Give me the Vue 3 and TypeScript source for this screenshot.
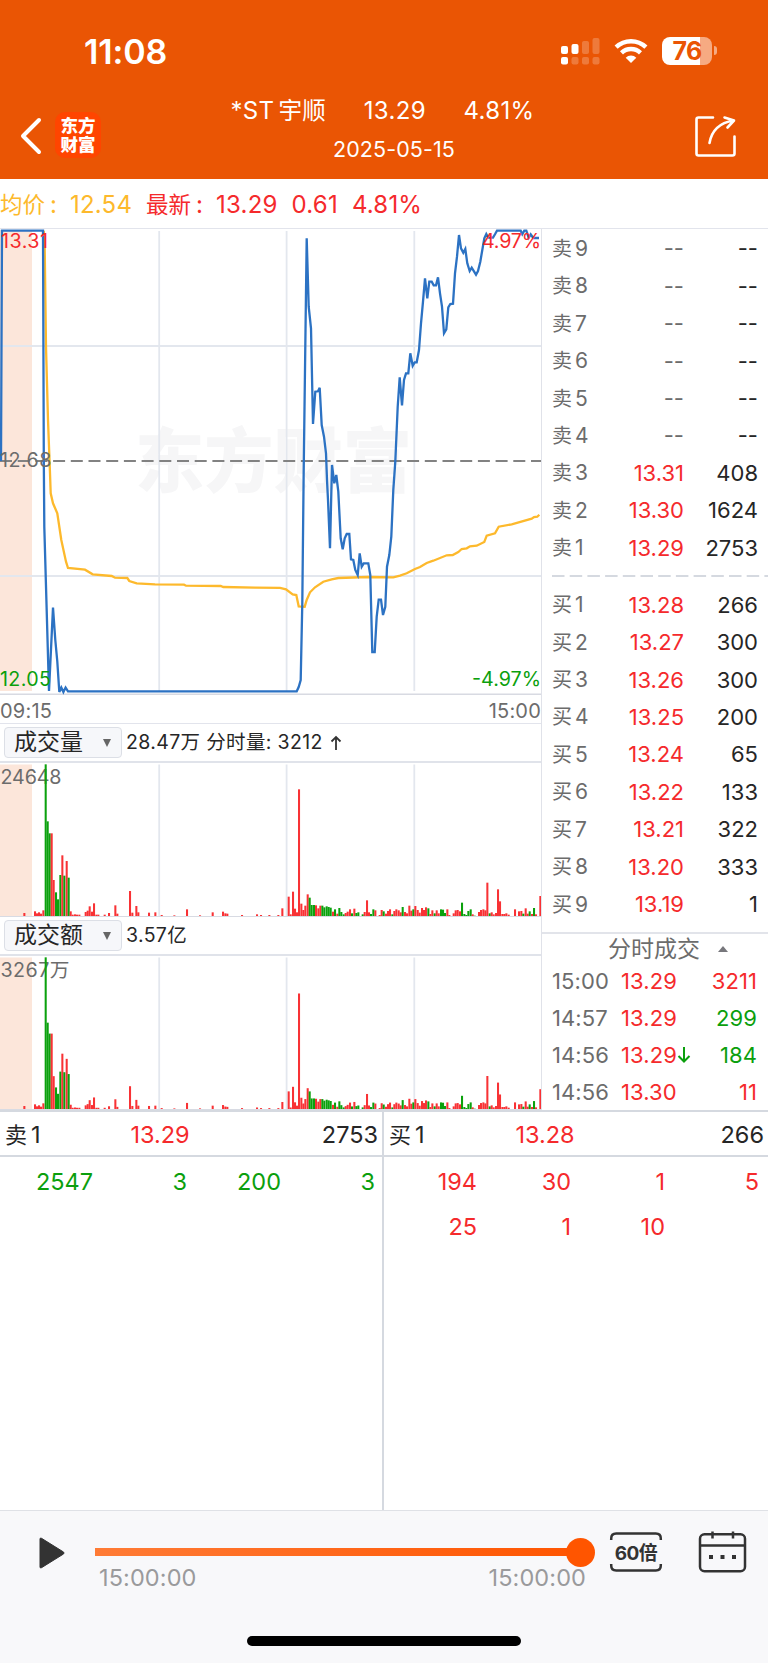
<script setup lang="ts">
type Bar = { x: number; h: number; up: boolean }
type Level = { label: string; price: string; volume: string }
type Tick = { time: string; price: string; volume: string; up: boolean; falling?: boolean }

const none = '--'
const sells: Level[] = [
  { label: '卖9', price: none, volume: none },
  { label: '卖8', price: none, volume: none },
  { label: '卖7', price: none, volume: none },
  { label: '卖6', price: none, volume: none },
  { label: '卖5', price: none, volume: none },
  { label: '卖4', price: none, volume: none },
  { label: '卖3', price: '13.31', volume: '408' },
  { label: '卖2', price: '13.30', volume: '1624' },
  { label: '卖1', price: '13.29', volume: '2753' },
]
const buys: Level[] = [
  { label: '买1', price: '13.28', volume: '266' },
  { label: '买2', price: '13.27', volume: '300' },
  { label: '买3', price: '13.26', volume: '300' },
  { label: '买4', price: '13.25', volume: '200' },
  { label: '买5', price: '13.24', volume: '65' },
  { label: '买6', price: '13.22', volume: '133' },
  { label: '买7', price: '13.21', volume: '322' },
  { label: '买8', price: '13.20', volume: '333' },
  { label: '买9', price: '13.19', volume: '1' },
]
const ticks: Tick[] = [
  { time: '15:00', price: '13.29', volume: '3211', up: true },
  { time: '14:57', price: '13.29', volume: '299', up: false },
  { time: '14:56', price: '13.29', volume: '184', up: false, falling: true },
  { time: '14:56', price: '13.30', volume: '11', up: true },
]
const queues = [
  { side: '卖1', price: '13.29', total: '2753', cls: 'green', orders: ['2547', '3', '200', '3'] },
  { side: '买1', price: '13.28', total: '266', cls: 'red', orders: ['194', '30', '1', '5', '25', '1', '10'] },
]

const priceLine =
  '1,461 2,230.7 43,230.7 43.8,460 44.3,526.7 49,691 53,607.5 55.3,640 57.3,661.5 59.3,692 61.3,687.5 63.4,692 65.6,687.5 68,691.3 ' +
  '296.7,691.3 298.7,687 300.7,680 302.3,603 303.7,470 306.7,238.3 308.7,306.7 311,328.3 313,424 315.3,391.7 318,391.3 319.7,387.7 ' +
  '321.7,425 324,436.7 326,453.3 327,480 328,500 330,548.3 332,465 334.3,483.3 336.3,475 338.3,491.7 340.7,538.3 342.7,549.3 ' +
  '344.7,538.3 346.7,534 349.3,534 351,559.3 353.3,560 355.3,570 357.7,575 359.7,553.3 361.7,566.7 363.7,563.3 368.3,563.3 ' +
  '370.3,575 372.3,652 374.7,652 376.7,616.7 378.7,599.7 381,599.7 383,615 385.3,606.7 387,566.7 389.3,555 391.3,536.7 393.3,490 ' +
  '395.3,461.7 397.7,406.7 399.7,377.3 402,405.3 404,380 406,373.3 408.3,373.3 410.3,353.3 412.7,365.7 414.7,362.3 416.7,362.3 ' +
  '419,350 421,323.3 423,301.7 425,278.3 427.3,298.3 429.3,281.7 431.7,281.7 433.7,285.3 436,285.3 438,277.3 440,293.3 442,306.7 ' +
  '444,333.3 446.3,329.3 448.3,307.3 450.3,304 453,303.7 455,273.3 457,256.7 459,235 461,248.3 463.3,252.7 465.3,249 467.3,263.3 ' +
  '469.7,271 471.7,267.7 476,274.7 478,271 480.3,261.7 482.3,250 484.3,238.3 486.3,234 488.3,237.7 493,237.7 495,234.3 497,230.7 ' +
  '520.7,230.7 522.3,234.3 524.3,230.7 526.3,230.7 528.7,237.7 530.7,234.3 533.3,238 539,238'
const averageLine =
  '43.8,230.7 44.7,246.7 46,346.7 48,420 50,473.3 50.7,493.3 53,503.3 57.3,513.3 61.3,540 66,561.7 68,568 85,569.7 92.7,574.3 ' +
  '111.7,576 115,577.7 127.3,578 129.3,581 136.7,583.3 155,584.3 184,584.7 186,585.7 220.7,586 223.3,587 255,587.7 280,587.9 ' +
  '286,589.3 292.7,594.3 296.3,595 298.7,606.3 304.7,606.7 306.7,600 310,592.3 315,587.3 323.3,581.7 331.7,579.3 338.3,578 ' +
  '368.3,577 393.3,577.3 400,575.7 406.7,573.3 415,569 420,567 426.7,563 433.3,560.7 446.7,555.3 452.7,555 458.3,552 461.7,549 ' +
  '466.7,548.3 470,546.3 476.7,545.7 484.3,542 486.7,535.7 495,533.3 498.7,526.7 511.7,524.3 531.7,518.7 534,517 537.3,516.7 539.3,514.7'

// Each entry is "position height", in thirds of a pixel; a trailing g marks a falling minute.
const morning =
  '73 9,105 14,111 8,117 11,123 7,130 17,137 455g,143 284g,149 248g,155 248,161 108,168 71g,174 50g,181 123g,187 182,193 121g,' +
  '200 165,206 115g,212 14,218 4,225 5,231 4,238 4,257 12,263 16,269 29,276 13,282 38,289 4,295 4,314 4,327 9,346 32,352 7,' +
  '390 75,397 10,409 30,415 11,447 10,466 11,485 3,523 2,561 20,600 2,638 11,669 13,676 8,682 7,726 3,771 5,783 3,808 3'
const afternoon =
  '25 3,37 23,56 58,62 5,69 73,75 22,81 11,87 380,94 37,100 18,106 31,113 65,119 55g,125 33g,132 33g,138 32,145 23,151 31,' +
  '157 31g,163 26g,170 29g,176 27g,182 25g,189 13,195 20g,202 7,208 24g,214 12g,221 5g,227 9,233 13,240 20,246 8g,253 22,' +
  '259 9g,265 11g,278 5g,284 12,291 47,297 11,303 6g,310 20g,316 17,329 3,335 18,341 14g,348 7,354 15,360 20,367 5g,373 15,' +
  '379 20,386 17,392 11,398 27g,405 12,411 8,418 31,424 16,430 20g,436 30,443 18,449 10,456 24,462 18,468 26,475 23g,481 6,' +
  '487 17,494 8g,500 17,506 8,513 20g,519 19g,525 9g,532 20,538 3,551 8,557 17,563 18,570 14,576 40g,583 6g,589 3g,595 15g,' +
  '602 20g,608 5,614 1g,627 12,633 18,640 20,646 17,652 100,659 8g,665 11,671 5,678 9,684 80,690 44,697 6,703 6,709 8,716 4,' +
  '735 20,747 14,754 15,760 7g,767 23,773 7,779 14g,786 6,792 24g,798 5,811 60'

function parse(source: string, offset: number): Bar[] {
  return source.split(',').map((entry) => {
    const [x, h] = entry.split(' ')
    return { x: offset + Number(x) / 3, h: parseFloat(h) / 3, up: !h.endsWith('g') }
  })
}
const volumes = [...parse(morning, 0), ...parse(afternoon, 270)]
const amounts = volumes.map((b) => {
  const k = b.x < 46 ? 1 : b.x < 304 ? 0.912 : b.x < 400 ? 0.96 : 0.99
  return { ...b, h: b.h * k }
})
const panels = [
  { name: '成交量', note: '28.47万 分时量: 3212', arrow: true, top: '24648', topWidth: 61, bars: volumes },
  { name: '成交额', note: '3.57亿', arrow: false, top: '3267万', topWidth: 69, bars: amounts },
]
const gridX = [159.2, 286.6, 414.3]
</script>

<template>
  <div class="screen">
    <header class="top">
      <div class="status">
        <span class="clock">11:08</span>
        <div class="status-icons">
          <svg class="signal" width="40" height="28" viewBox="0 0 40 28" fill="#fff">
            <rect x="1" y="9" width="7" height="8" rx="2" />
            <rect x="1" y="20" width="7" height="7.5" rx="2" />
            <rect x="11.5" y="7" width="7" height="10" rx="2" />
            <g opacity=".22">
              <rect x="22" y="4" width="7" height="13" rx="2" />
              <rect x="32.500" y="1" width="7" height="16" rx="2" />
              <rect x="11.500" y="20" width="7" height="7.500" rx="2" />
              <rect x="22" y="20" width="7" height="7.500" rx="2" />
              <rect x="32.500" y="20" width="7" height="7.500" rx="2" />
            </g>
          </svg>
          <svg class="wifi" width="34" height="26" viewBox="0 0 34 26" fill="none" stroke="#fff" stroke-width="4.400">
            <path d="M2.100 9.200a21.500 21.500 0 0 1 29.800 0" />
            <path d="M7.500 14.800a13.800 13.800 0 0 1 19 0" />
            <path d="M17 25l-5.300-5.300a7.800 7.800 0 0 1 10.600 0z" fill="#fff" stroke="none" />
          </svg>
          <div class="battery"><span>76</span></div>
          <i class="battery-tip"></i>
        </div>
      </div>
      <div class="title-bar">
        <svg class="back" width="24" height="38" viewBox="0 0 24 38" fill="none" stroke="#fff" stroke-width="4" stroke-linecap="round" stroke-linejoin="round">
          <path d="M20 3L4 19l16 16" />
        </svg>
        <div class="brand">东方财富</div>
        <div class="titles">
          <div class="stock"><span>*ST<b class="cjk">宇顺</b></span><span>13.29</span><span>4.81%</span></div>
          <div class="date">2025-05-15</div>
        </div>
        <svg class="share" width="44" height="44" viewBox="0 0 44 44" fill="none" stroke="#fff" stroke-width="2.600" stroke-linecap="round" stroke-linejoin="round">
          <path d="M20 3.500H5.500q-2 0-2 2v34q0 2 2 2h34q2 0 2-2V22.500" />
          <path d="M16.500 29C18.500 17.500 25.500 9 40.500 6.500M31.500 3.500L41 6.500l-6.500 7" />
        </svg>
      </div>
    </header>

    <div class="summary">
      <span class="avg"><b>均价</b><i class="colon">:</i>12.54</span>
      <span class="last"><b>最新</b><i class="colon">:</i>13.29</span>
      <span>0.61</span>
      <span>4.81%</span>
    </div>

    <main class="main">
      <section class="charts">
        <svg class="price" width="541" height="466" viewBox="0 229 541 466">
          <rect x="0" y="230" width="32" height="461" fill="#fce6da" />
          <text class="watermark" x="135" y="487" textLength="277" lengthAdjust="spacingAndGlyphs">东方财富</text>
          <g stroke="#e3e7ee" stroke-width="1.800">
            <line v-for="x in gridX" :key="x" :x1="x" :x2="x" y1="231" y2="691" />
            <line x1="0" x2="541" y1="346" y2="346" />
            <line x1="0" x2="541" y1="576" y2="576" />
          </g>
          <line x1="0" x2="541" y1="694.200" y2="694.200" stroke="#d8dae2" stroke-width="1.400" />
          <line x1="0" x2="541" y1="461" y2="461" stroke="#828282" stroke-width="2" stroke-dasharray="12 5.700" />
          <polyline :points="averageLine" fill="none" stroke="#fdb92c" stroke-width="2.300" />
          <polyline :points="priceLine" fill="none" stroke="#2c72c3" stroke-width="2.300" />
          <text class="mark" x="1" y="248" fill="#f52a2c" textLength="47">13.31</text>
          <text class="mark" x="0" y="467" fill="#6c6c6c" textLength="51.500">12.68</text>
          <text class="mark" x="0" y="686" fill="#0b9f0d" textLength="51">12.05</text>
          <text class="mark" x="482" y="248" fill="#f52a2c" textLength="59">4.97%</text>
          <text class="mark" x="472" y="686" fill="#0b9f0d" textLength="69">-4.97%</text>
        </svg>
        <div class="times"><span>09:15</span><span>15:00</span></div>
        <template v-for="p in panels" :key="p.name">
          <div class="panel-head">
            <div class="picker">{{ p.name }}<i></i></div>
            <span class="note">{{ p.note }}</span>
            <svg v-if="p.arrow" class="up" width="14" height="16" viewBox="0 0 14 16" fill="none" stroke="#333" stroke-width="1.800">
              <path d="M7 15V2M2.500 6.500L7 2l4.500 4.500" />
            </svg>
          </div>
          <svg class="bars" width="541" height="153" viewBox="0 0 541 153">
            <rect x="0" y="1.500" width="32" height="151.500" fill="#fce6da" />
            <line v-for="x in gridX" :key="x" :x1="x" :x2="x" y1="1.500" y2="153" stroke="#e3e7ee" stroke-width="1.800" />
            <text class="mark" x="0.500" y="20.500" fill="#6c6c6c" :textLength="p.topWidth">{{ p.top }}</text>
            <rect v-for="b in p.bars" :key="b.x" :x="b.x - 1" :y="153 - b.h" width="2.050" :height="b.h" :fill="b.up ? '#f83235' : '#0ba10d'" />
          </svg>
        </template>
      </section>

      <section class="book">
        <div class="levels">
          <div v-for="l in sells" :key="l.label" class="level">
            <span class="lab">{{ l.label[0] }}<i>{{ l.label[1] }}</i></span>
            <span :class="l.price === none ? 'empty' : 'red'">{{ l.price }}</span>
            <span class="vol">{{ l.volume }}</span>
          </div>
        </div>
        <svg class="divider" width="227" height="18" viewBox="0 0 227 18">
          <line x1="10" x2="227" y1="9" y2="9" stroke="#d5d9e0" stroke-width="2" stroke-dasharray="12.500 5.200" />
        </svg>
        <div class="levels buys">
          <div v-for="l in buys" :key="l.label" class="level">
            <span class="lab">{{ l.label[0] }}<i>{{ l.label[1] }}</i></span>
            <span class="red">{{ l.price }}</span>
            <span class="vol">{{ l.volume }}</span>
          </div>
        </div>
        <div class="ticks">
          <div class="ticks-title">分时成交<i></i></div>
          <div v-for="(t, n) in ticks" :key="n" class="tick">
            <span>{{ t.time }}</span>
            <span class="red tick-price">{{ t.price }}<svg v-if="t.falling" width="14" height="18" viewBox="0 0 14 18" fill="none" stroke="#0b9f0d" stroke-width="2"><path d="M7 1v14.500M1.500 10L7 15.500l5.500-5.500" /></svg></span>
            <span class="tick-vol" :class="t.up ? 'red' : 'green'">{{ t.volume }}</span>
          </div>
        </div>
      </section>
    </main>

    <section class="queues">
      <div v-for="q in queues" :key="q.side" class="queue">
        <div class="queue-head">
          <span><b>{{ q.side[0] }}</b><i>{{ q.side[1] }}</i></span><span class="red">{{ q.price }}</span><span>{{ q.total }}</span>
        </div>
        <div class="orders" :class="q.cls">
          <span v-for="(o, n) in q.orders" :key="n">{{ o }}</span>
        </div>
      </div>
    </section>

    <footer class="player">
      <div class="controls">
        <svg class="play" width="28" height="34" viewBox="0 0 28 34"><path d="M2 3v28q0 1.500 1.500.7L25.500 18q1-1 0-2L3.500 2.300Q2 1.500 2 3z" fill="#333" stroke="#333" /></svg>
        <div class="slider">
          <div class="track"><i></i></div>
          <div class="range"><span>15:00:00</span><span>15:00:00</span></div>
        </div>
        <div class="speed">
          <svg width="54" height="42" viewBox="0 0 54 42" fill="none" stroke="#333" stroke-width="2.500">
            <path d="M2.200 9V7.500q0-5 5-5h39.600q5 0 5 5V9M2.200 33v1.500q0 5 5 5h39.600q5 0 5-5V33" />
          </svg>
          <b>60倍</b>
        </div>
        <svg class="calendar" width="50" height="44" viewBox="0 0 50 44" fill="none" stroke="#333" stroke-width="2.500">
          <rect x="2" y="4.300" width="45" height="37" rx="4.500" />
          <path d="M2 15.500h45M14.500 1.500v7M35 1.500v7" />
          <path d="M11 27h4M22.500 27h4M34 27h4" stroke-width="3.800" />
        </svg>
      </div>
      <div class="home"></div>
    </footer>
  </div>
</template>

<style>
body { margin: 0; background: #fff; }
</style>

<style scoped>
.screen { width: 768px; height: 1663px; overflow: hidden; display: flex; flex-direction: column; background: #fff; color: #262626; font-family: Inter, "Noto Sans CJK SC", sans-serif; font-size: 21px; line-height: 1; white-space: nowrap; }
.screen * { box-sizing: border-box; }
i { font-style: normal; }
.red { color: #f52a2c; }
.green { color: #0b9f0d; }
.top { height: 179px; flex: none; background: #ea5504; color: #fff; }
.status { height: 102px; display: flex; justify-content: space-between; padding: 34px 51px 0 84px; }
.clock { font-size: 34px; font-weight: 600; line-height: 36px; letter-spacing: -.1px; }
.status-icons { display: flex; align-items: flex-start; padding-top: 3px; }
.wifi { margin: 1px 0 0 14px; }
.battery { width: 50px; height: 28px; margin-left: 14px; border-radius: 8px; background: linear-gradient(90deg, #fff 76%, #f6aa82 76%); color: #ea5504; font-size: 25px; font-weight: 700; line-height: 28px; text-align: center; letter-spacing: -.8px; }
.battery-tip { width: 3px; height: 9px; margin: 9px 0 0 2px; border-radius: 0 3px 3px 0; background: #f6aa82; }
.title-bar { display: flex; height: 77px; padding-left: 19px; }
.back { margin-top: 15px; }
.brand { width: 46px; height: 46px; margin: 10px 0 0 12px; padding: 3px 0 0 5.500px; border-radius: 10px; background: #ff4500; white-space: normal; word-break: break-all; font: 900 17.500px/19px "Noto Sans CJK SC", sans-serif; }
.titles { width: 330px; margin-left: 128px; display: flex; flex-direction: column; align-items: center; margin-top: -5px; }
.stock { display: flex; width: 304px; margin-right: 23px; justify-content: space-between; font-size: 24px; line-height: 28px; letter-spacing: .35px; }
.cjk { font-weight: 400; font-size: 23.500px; margin-left: 4px; }
.date { margin-top: 13px; font-size: 21.500px; line-height: 22px; letter-spacing: .1px; }
.share { margin: 12px 0 0 134px; }
.summary { height: 50px; flex: none; display: flex; gap: 14px; align-items: center; padding-top: 2px; border-bottom: 1px solid #e2e4ec; font-size: 24px; letter-spacing: .2px; color: #f52a2c; }
.summary b { font-weight: 400; font-size: 22.500px; letter-spacing: 0; }
.avg { color: #fdb92c; }
.colon { display: inline-block; width: 25px; padding-left: 5px; }
.main { height: 881px; flex: none; display: flex; }
.charts { width: 542px; border-right: 1px solid #e0e2e9; }
.price { display: block; }
.mark { font-size: 19.700px; }
.watermark { font: 900 70px "Noto Sans CJK SC", sans-serif; fill: #f6f6f7; }
.times { height: 29px; display: flex; justify-content: space-between; align-items: center; padding-top: 3px; color: #6c6c6c; font-size: 20px; letter-spacing: .2px; border-bottom: 1px solid #e2e4ec; }
.panel-head { height: 39px; display: flex; align-items: center; padding-left: 4px; border-bottom: 2px solid #e0e3ea; }
.picker { width: 118px; height: 31px; padding-left: 9px; border: 1px solid #dcdfe6; border-radius: 4px; background: #f6f7fa; font-size: 23px; line-height: 29px; display: flex; align-items: center; justify-content: space-between; }
.picker i { margin-right: 10px; border: 4.500px solid transparent; border-top: 8px solid #666; border-bottom: 0; }
.note { margin-left: 4px; padding-top: 1px; font-size: 19.500px; letter-spacing: .35px; }
.up { margin-left: 6px; }
.screen .bars { display: block; box-sizing: content-box; border-bottom: 1px solid #d8dbe3; }
.book { width: 226px; }
.levels { padding-top: .5px; }
.buys { padding-top: 1.300px; }
.level { height: 37.460px; display: grid; grid-template-columns: 62px 70px 74px; padding-left: 10px; align-items: center; font-size: 22px; }
.level > span + span { text-align: right; }
.lab { color: #6c6c6c; font-size: 20px; }
.lab i { margin-left: 3px; font-size: 21px; }
.empty { color: #6c6c6c; }
.vol { color: #262626; }
.divider { display: block; }
.ticks { margin-top: 9px; border-top: 2px solid #e2e4ea; }
.ticks-title { height: 29px; display: flex; align-items: center; padding: 2px 0 0 66px; font-size: 23px; color: #6c6c6c; }
.ticks-title i { margin-left: 18px; border: 5.500px solid transparent; border-bottom: 6px solid #77777c; border-top: 0; }
.tick { height: 36.800px; display: grid; grid-template-columns: 69px 72px 64px; align-items: center; padding-left: 10px; font-size: 22px; color: #6c6c6c; letter-spacing: .1px; }
.tick .red { color: #f52a2c; }
.tick .green { color: #0b9f0d; }
.tick-price { display: flex; align-items: center; }
.tick-price svg { flex: none; }
.tick-vol { text-align: right; }
.queues { height: 400px; flex: none; display: flex; border-top: 2px solid #d5d9e0; }
.queue { width: 384px; }
.queue:first-child { border-right: 2px solid #d5d9e0; }
.queue-head { height: 45px; display: grid; grid-template-columns: 110px 1fr 110px; align-items: center; padding: 3px 4px 0 5px; border-bottom: 2px solid #d5d9e0; font-size: 23.500px; }
.queue-head b { font-weight: 400; font-size: 22px; }
.queue-head i { margin-left: 4px; }
.queue-head span:nth-child(2) { text-align: center; padding-right: 63px; }
.queue-head span:last-child { text-align: right; }
.orders { display: grid; grid-template-columns: 93px 94px 94px 94px; grid-auto-rows: 45px; align-items: center; padding-top: 2px; text-align: right; font-size: 23.500px; }
.player { flex: 1; background: #f8f8fa; border-top: 1px solid #dfe1e6; }
.controls { height: 124px; display: flex; padding: 19px 0 0 38px; }
.play { margin-top: 6px; }
.slider { width: 493px; margin: 18px 0 0 29px; }
.track { height: 8px; width: 485px; background: linear-gradient(90deg, #ff7b35, #ff5500); display: flex; justify-content: flex-end; align-items: center; }
.track i { flex: none; width: 29px; height: 29px; margin-right: -15px; border-radius: 50%; background: #ff5500; }
.range { display: flex; justify-content: space-between; padding: 10px 2px 0 4px; font-size: 23.500px; letter-spacing: .1px; color: #9a9a9c; }
.speed { width: 54px; height: 42px; margin: 1px 0 0 21px; display: grid; place-items: center; }
.speed > * { grid-area: 1 / 1; }
.speed b { margin-top: 3px; font-size: 19px; font-weight: 700; letter-spacing: -.5px; color: #333; }
.calendar { margin: 0 0 0 35px; }
.home { width: 274px; height: 10px; margin: 1px auto 0; border-radius: 5px; background: #000; }
</style>
